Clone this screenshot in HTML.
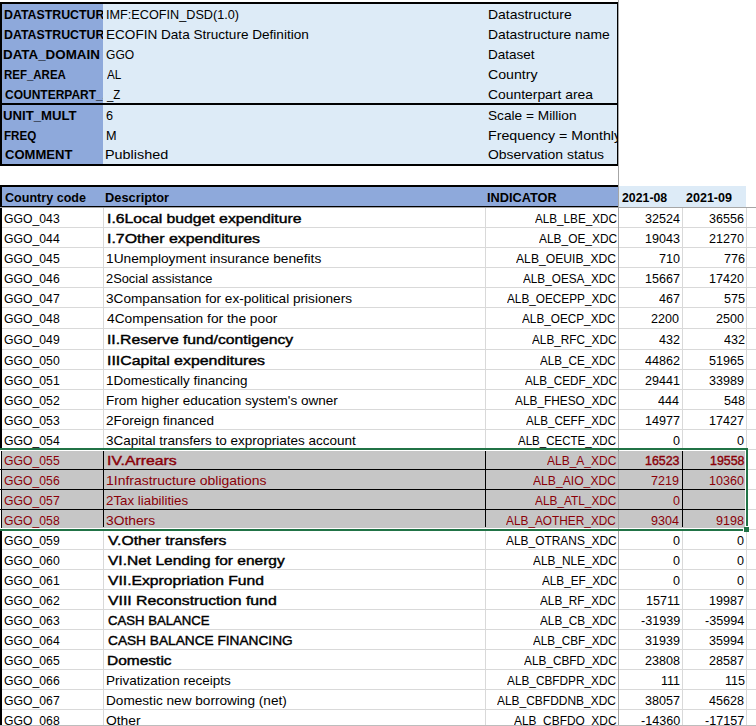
<!DOCTYPE html>
<html><head><meta charset="utf-8"><style>
html,body{margin:0;padding:0;background:#fff;}
#r{position:relative;width:756px;height:726px;overflow:hidden;background:#fff;}
#r div{position:absolute;}
#r .t{font-family:"Liberation Sans",sans-serif;font-size:13px;line-height:20px;white-space:pre;transform-origin:0 0;}
</style></head><body><div id="r">
<div style="left:2px;top:4px;width:101px;height:99px;background:#8EA9DB"></div>
<div style="left:2px;top:105px;width:101px;height:59px;background:#8EA9DB"></div>
<div style="left:103px;top:4px;width:514px;height:99px;background:#DDEBF7"></div>
<div style="left:103px;top:105px;width:514px;height:59px;background:#DDEBF7"></div>
<div style="left:2px;top:187px;width:616px;height:19px;background:#8EA9DB"></div>
<div style="left:619px;top:186px;width:127px;height:21px;background:#DDEBF7"></div>
<div style="left:2px;top:451px;width:743px;height:77px;background:#C6C6C6"></div>
<div style="left:2px;top:227px;width:754px;height:1px;background:#D9D9D9"></div>
<div style="left:2px;top:247px;width:754px;height:1px;background:#D9D9D9"></div>
<div style="left:2px;top:267px;width:754px;height:1px;background:#D9D9D9"></div>
<div style="left:2px;top:287px;width:754px;height:1px;background:#D9D9D9"></div>
<div style="left:2px;top:307px;width:754px;height:1px;background:#D9D9D9"></div>
<div style="left:2px;top:328px;width:754px;height:1px;background:#D9D9D9"></div>
<div style="left:2px;top:349px;width:754px;height:1px;background:#D9D9D9"></div>
<div style="left:2px;top:369px;width:754px;height:1px;background:#D9D9D9"></div>
<div style="left:2px;top:389px;width:754px;height:1px;background:#D9D9D9"></div>
<div style="left:2px;top:409px;width:754px;height:1px;background:#D9D9D9"></div>
<div style="left:2px;top:429px;width:754px;height:1px;background:#D9D9D9"></div>
<div style="left:748px;top:449px;width:8px;height:1px;background:#D9D9D9"></div>
<div style="left:748px;top:469px;width:8px;height:1px;background:#D9D9D9"></div>
<div style="left:748px;top:489px;width:8px;height:1px;background:#D9D9D9"></div>
<div style="left:748px;top:509px;width:8px;height:1px;background:#D9D9D9"></div>
<div style="left:748px;top:529px;width:8px;height:1px;background:#D9D9D9"></div>
<div style="left:2px;top:549px;width:754px;height:1px;background:#D9D9D9"></div>
<div style="left:2px;top:569px;width:754px;height:1px;background:#D9D9D9"></div>
<div style="left:2px;top:589px;width:754px;height:1px;background:#D9D9D9"></div>
<div style="left:2px;top:609px;width:754px;height:1px;background:#D9D9D9"></div>
<div style="left:2px;top:629px;width:754px;height:1px;background:#D9D9D9"></div>
<div style="left:2px;top:649px;width:754px;height:1px;background:#D9D9D9"></div>
<div style="left:2px;top:669px;width:754px;height:1px;background:#D9D9D9"></div>
<div style="left:2px;top:689px;width:754px;height:1px;background:#D9D9D9"></div>
<div style="left:2px;top:709px;width:754px;height:1px;background:#D9D9D9"></div>
<div style="left:2px;top:729px;width:754px;height:1px;background:#D9D9D9"></div>
<div style="left:103px;top:208px;width:1px;height:240px;background:#D9D9D9"></div>
<div style="left:103px;top:531px;width:1px;height:195px;background:#D9D9D9"></div>
<div style="left:485px;top:208px;width:1px;height:240px;background:#D9D9D9"></div>
<div style="left:485px;top:531px;width:1px;height:195px;background:#D9D9D9"></div>
<div style="left:682px;top:208px;width:1px;height:240px;background:#D9D9D9"></div>
<div style="left:682px;top:531px;width:1px;height:195px;background:#D9D9D9"></div>
<div style="left:746px;top:208px;width:1px;height:240px;background:#D9D9D9"></div>
<div style="left:746px;top:531px;width:1px;height:195px;background:#D9D9D9"></div>
<div style="left:618px;top:0px;width:1px;height:726px;background:#A6A6A6"></div>
<div style="left:0px;top:207px;width:756px;height:1px;background:#A6A6A6"></div>
<div style="left:0px;top:2px;width:618px;height:2px;background:#000"></div>
<div style="left:0px;top:2px;width:2px;height:164px;background:#000"></div>
<div style="left:617px;top:2px;width:1px;height:164px;background:#000"></div>
<div style="left:0px;top:103px;width:618px;height:2px;background:#000"></div>
<div style="left:0px;top:164px;width:618px;height:2px;background:#000"></div>
<div style="left:0px;top:185px;width:618px;height:2px;background:#000"></div>
<div style="left:0px;top:185px;width:2px;height:22px;background:#000"></div>
<div style="left:0px;top:206px;width:618px;height:1px;background:#000"></div>
<div style="left:0px;top:208px;width:2px;height:240px;background:#000"></div>
<div style="left:0px;top:531px;width:2px;height:195px;background:#000"></div>
<div style="left:1px;top:451px;width:1px;height:77px;background:#000"></div>
<div style="left:0px;top:469px;width:745px;height:1px;background:#000"></div>
<div style="left:0px;top:489px;width:745px;height:1px;background:#000"></div>
<div style="left:0px;top:509px;width:745px;height:1px;background:#000"></div>
<div style="left:103px;top:451px;width:1px;height:76px;background:#000"></div>
<div style="left:485px;top:451px;width:1px;height:76px;background:#000"></div>
<div style="left:682px;top:451px;width:1px;height:76px;background:#000"></div>
<div style="left:0px;top:448px;width:748px;height:2px;background:#217346"></div>
<div style="left:0px;top:529px;width:743px;height:2px;background:#217346"></div>
<div style="left:746px;top:448px;width:2px;height:78px;background:#217346"></div>
<div style="left:744px;top:527px;width:5px;height:5px;background:#217346"></div>
<div style="left:2px;top:0;width:101px;height:726px;overflow:hidden"><div style="position:absolute;left:-2px;top:0;width:756px;height:726px"><div class="t" style="left:3.55px;top:4.80px;font-weight:bold;color:#000;transform:scaleX(0.9500)">DATASTRUCTURE</div></div></div>
<div style="left:2px;top:0;width:101px;height:726px;overflow:hidden"><div style="position:absolute;left:-2px;top:0;width:756px;height:726px"><div class="t" style="left:3.55px;top:24.70px;font-weight:bold;color:#000;transform:scaleX(0.9500)">DATASTRUCTURE</div></div></div>
<div style="left:2px;top:0;width:101px;height:726px;overflow:hidden"><div style="position:absolute;left:-2px;top:0;width:756px;height:726px"><div class="t" style="left:3.47px;top:44.60px;font-weight:bold;color:#000;transform:scaleX(1.0283)">DATA_DOMAIN</div></div></div>
<div style="left:2px;top:0;width:101px;height:726px;overflow:hidden"><div style="position:absolute;left:-2px;top:0;width:756px;height:726px"><div class="t" style="left:3.62px;top:64.70px;font-weight:bold;color:#000;transform:scaleX(0.8826)">REF_AREA</div></div></div>
<div style="left:2px;top:0;width:101px;height:726px;overflow:hidden"><div style="position:absolute;left:-2px;top:0;width:756px;height:726px"><div class="t" style="left:4.50px;top:84.60px;font-weight:bold;color:#000;transform:scaleX(0.9232)">COUNTERPART_AREA</div></div></div>
<div style="left:2px;top:0;width:101px;height:726px;overflow:hidden"><div style="position:absolute;left:-2px;top:0;width:756px;height:726px"><div class="t" style="left:3.49px;top:105.70px;font-weight:bold;color:#000;transform:scaleX(1.0125)">UNIT_MULT</div></div></div>
<div style="left:2px;top:0;width:101px;height:726px;overflow:hidden"><div style="position:absolute;left:-2px;top:0;width:756px;height:726px"><div class="t" style="left:3.61px;top:125.60px;font-weight:bold;color:#000;transform:scaleX(0.8943)">FREQ</div></div></div>
<div style="left:2px;top:0;width:101px;height:726px;overflow:hidden"><div style="position:absolute;left:-2px;top:0;width:756px;height:726px"><div class="t" style="left:4.50px;top:145.40px;font-weight:bold;color:#000;transform:scaleX(1.0030)">COMMENT</div></div></div>
<div class="t" style="left:105.63px;top:4.80px;color:#000;transform:scaleX(0.9748)">IMF:ECOFIN_DSD(1.0)</div>
<div class="t" style="left:105.56px;top:24.70px;color:#000;transform:scaleX(1.0435)">ECOFIN Data Structure Definition</div>
<div class="t" style="left:105.67px;top:44.60px;color:#000;transform:scaleX(0.9276)">GGO</div>
<div class="t" style="left:106.60px;top:64.70px;color:#000;transform:scaleX(0.9000)">AL</div>
<div class="t" style="left:106.60px;top:84.60px;color:#000;transform:scaleX(0.8800)">_Z</div>
<div class="t" style="left:105.63px;top:105.70px;color:#000;transform:scaleX(0.9749)">6</div>
<div class="t" style="left:105.63px;top:125.60px;color:#000;transform:scaleX(0.9749)">M</div>
<div class="t" style="left:105.49px;top:145.40px;color:#000;transform:scaleX(1.1073)">Published</div>
<div style="left:486px;top:0;width:131px;height:726px;overflow:hidden"><div style="position:absolute;left:-486px;top:0;width:756px;height:726px"><div class="t" style="left:487.63px;top:4.80px;color:#000;transform:scaleX(1.0727)">Datastructure</div></div></div>
<div style="left:486px;top:0;width:131px;height:726px;overflow:hidden"><div style="position:absolute;left:-486px;top:0;width:756px;height:726px"><div class="t" style="left:487.63px;top:24.70px;color:#000;transform:scaleX(1.0664)">Datastructure name</div></div></div>
<div style="left:486px;top:0;width:131px;height:726px;overflow:hidden"><div style="position:absolute;left:-486px;top:0;width:756px;height:726px"><div class="t" style="left:487.66px;top:44.60px;color:#000;transform:scaleX(1.0409)">Dataset</div></div></div>
<div style="left:486px;top:0;width:131px;height:726px;overflow:hidden"><div style="position:absolute;left:-486px;top:0;width:756px;height:726px"><div class="t" style="left:487.61px;top:64.70px;color:#000;transform:scaleX(1.0886)">Country</div></div></div>
<div style="left:486px;top:0;width:131px;height:726px;overflow:hidden"><div style="position:absolute;left:-486px;top:0;width:756px;height:726px"><div class="t" style="left:487.63px;top:84.60px;color:#000;transform:scaleX(1.0680)">Counterpart area</div></div></div>
<div style="left:486px;top:0;width:131px;height:726px;overflow:hidden"><div style="position:absolute;left:-486px;top:0;width:756px;height:726px"><div class="t" style="left:487.65px;top:105.70px;color:#000;transform:scaleX(1.0518)">Scale = Million</div></div></div>
<div style="left:486px;top:0;width:131px;height:726px;overflow:hidden"><div style="position:absolute;left:-486px;top:0;width:756px;height:726px"><div class="t" style="left:487.61px;top:125.60px;color:#000;transform:scaleX(1.0934)">Frequency = Monthly</div></div></div>
<div style="left:486px;top:0;width:131px;height:726px;overflow:hidden"><div style="position:absolute;left:-486px;top:0;width:756px;height:726px"><div class="t" style="left:487.63px;top:145.40px;color:#000;transform:scaleX(1.0710)">Observation status</div></div></div>
<div class="t" style="left:4.80px;top:187.60px;font-weight:bold;color:#000;transform:scaleX(0.9663)">Country code</div>
<div class="t" style="left:105.41px;top:187.60px;font-weight:bold;color:#000;transform:scaleX(0.9859)">Descriptor</div>
<div class="t" style="left:487.02px;top:187.60px;font-weight:bold;color:#000;transform:scaleX(0.9814)">INDICATOR</div>
<div class="t" style="left:621.70px;top:187.60px;font-weight:bold;color:#000;transform:scaleX(0.9468)">2021-08</div>
<div class="t" style="left:685.50px;top:187.60px;font-weight:bold;color:#000;transform:scaleX(0.9638)">2021-09</div>
<div class="t" style="left:3.56px;top:209.20px;color:#000;transform:scaleX(0.9397)">GGO_043</div>
<div class="t" style="left:106.69px;top:209.20px;-webkit-text-stroke:0.4px #000;color:#000;transform:scaleX(1.2119)">I.6Local budget expenditure</div>
<div class="t" style="left:534.70px;top:209.20px;color:#000;transform:scaleX(0.8989)">ALB_LBE_XDC</div>
<div class="t" style="left:644.68px;top:209.20px;color:#000;transform:scaleX(0.9671)">32524</div>
<div class="t" style="left:709.18px;top:209.20px;color:#000;transform:scaleX(0.9671)">36556</div>
<div class="t" style="left:3.56px;top:229.20px;color:#000;transform:scaleX(0.9397)">GGO_044</div>
<div class="t" style="left:106.68px;top:229.20px;-webkit-text-stroke:0.4px #000;color:#000;transform:scaleX(1.2242)">I.7Other expenditures</div>
<div class="t" style="left:538.60px;top:229.20px;color:#000;transform:scaleX(0.9167)">ALB_OE_XDC</div>
<div class="t" style="left:644.68px;top:229.20px;color:#000;transform:scaleX(0.9671)">19043</div>
<div class="t" style="left:709.18px;top:229.20px;color:#000;transform:scaleX(0.9671)">21270</div>
<div class="t" style="left:3.56px;top:249.20px;color:#000;transform:scaleX(0.9397)">GGO_045</div>
<div class="t" style="left:105.54px;top:249.20px;color:#000;transform:scaleX(1.0564)">1Unemployment insurance benefits</div>
<div class="t" style="left:516.40px;top:249.20px;color:#000;transform:scaleX(0.9358)">ALB_OEUIB_XDC</div>
<div class="t" style="left:659.19px;top:249.20px;color:#000;transform:scaleX(0.9671)">710</div>
<div class="t" style="left:723.69px;top:249.20px;color:#000;transform:scaleX(0.9671)">776</div>
<div class="t" style="left:3.56px;top:269.20px;color:#000;transform:scaleX(0.9397)">GGO_046</div>
<div class="t" style="left:105.61px;top:269.20px;color:#000;transform:scaleX(0.9887)">2Social assistance</div>
<div class="t" style="left:523.40px;top:269.20px;color:#000;transform:scaleX(0.9039)">ALB_OESA_XDC</div>
<div class="t" style="left:644.68px;top:269.20px;color:#000;transform:scaleX(0.9671)">15667</div>
<div class="t" style="left:709.18px;top:269.20px;color:#000;transform:scaleX(0.9671)">17420</div>
<div class="t" style="left:3.56px;top:289.20px;color:#000;transform:scaleX(0.9397)">GGO_047</div>
<div class="t" style="left:105.55px;top:289.20px;color:#000;transform:scaleX(1.0476)">3Compansation for ex-political prisioners</div>
<div class="t" style="left:506.90px;top:289.20px;color:#000;transform:scaleX(0.9058)">ALB_OECEPP_XDC</div>
<div class="t" style="left:659.19px;top:289.20px;color:#000;transform:scaleX(0.9671)">467</div>
<div class="t" style="left:723.69px;top:289.20px;color:#000;transform:scaleX(0.9671)">575</div>
<div class="t" style="left:3.56px;top:309.20px;color:#000;transform:scaleX(0.9397)">GGO_048</div>
<div class="t" style="left:106.60px;top:309.20px;color:#000;transform:scaleX(1.0571)">4Compensation for the poor</div>
<div class="t" style="left:522.40px;top:309.20px;color:#000;transform:scaleX(0.9049)">ALB_OECP_XDC</div>
<div class="t" style="left:651.45px;top:309.20px;color:#000;transform:scaleX(0.9671)">2200</div>
<div class="t" style="left:715.95px;top:309.20px;color:#000;transform:scaleX(0.9671)">2500</div>
<div class="t" style="left:3.56px;top:330.20px;color:#000;transform:scaleX(0.9397)">GGO_049</div>
<div class="t" style="left:106.69px;top:330.20px;-webkit-text-stroke:0.4px #000;color:#000;transform:scaleX(1.2092)">II.Reserve fund/contigency</div>
<div class="t" style="left:532.20px;top:330.20px;color:#000;transform:scaleX(0.9065)">ALB_RFC_XDC</div>
<div class="t" style="left:659.19px;top:330.20px;color:#000;transform:scaleX(0.9671)">432</div>
<div class="t" style="left:723.69px;top:330.20px;color:#000;transform:scaleX(0.9671)">432</div>
<div class="t" style="left:3.56px;top:351.20px;color:#000;transform:scaleX(0.9397)">GGO_050</div>
<div class="t" style="left:106.68px;top:351.20px;-webkit-text-stroke:0.4px #000;color:#000;transform:scaleX(1.2219)">IIICapital expenditures</div>
<div class="t" style="left:540.30px;top:351.20px;color:#000;transform:scaleX(0.8964)">ALB_CE_XDC</div>
<div class="t" style="left:644.68px;top:351.20px;color:#000;transform:scaleX(0.9671)">44862</div>
<div class="t" style="left:709.18px;top:351.20px;color:#000;transform:scaleX(0.9671)">51965</div>
<div class="t" style="left:3.56px;top:371.20px;color:#000;transform:scaleX(0.9397)">GGO_051</div>
<div class="t" style="left:105.56px;top:371.20px;color:#000;transform:scaleX(1.0356)">1Domestically financing</div>
<div class="t" style="left:524.50px;top:371.20px;color:#000;transform:scaleX(0.9020)">ALB_CEDF_XDC</div>
<div class="t" style="left:644.68px;top:371.20px;color:#000;transform:scaleX(0.9671)">29441</div>
<div class="t" style="left:709.18px;top:371.20px;color:#000;transform:scaleX(0.9671)">33989</div>
<div class="t" style="left:3.56px;top:391.20px;color:#000;transform:scaleX(0.9397)">GGO_052</div>
<div class="t" style="left:105.56px;top:391.20px;color:#000;transform:scaleX(1.0401)">From higher education system&#x27;s owner</div>
<div class="t" style="left:515.30px;top:391.20px;color:#000;transform:scaleX(0.9118)">ALB_FHESO_XDC</div>
<div class="t" style="left:658.22px;top:391.20px;color:#000;transform:scaleX(0.9671)">444</div>
<div class="t" style="left:723.69px;top:391.20px;color:#000;transform:scaleX(0.9671)">548</div>
<div class="t" style="left:3.56px;top:411.20px;color:#000;transform:scaleX(0.9397)">GGO_053</div>
<div class="t" style="left:105.56px;top:411.20px;color:#000;transform:scaleX(1.0382)">2Foreign financed</div>
<div class="t" style="left:526.20px;top:411.20px;color:#000;transform:scaleX(0.8940)">ALB_CEFF_XDC</div>
<div class="t" style="left:644.68px;top:411.20px;color:#000;transform:scaleX(0.9671)">14977</div>
<div class="t" style="left:709.18px;top:411.20px;color:#000;transform:scaleX(0.9671)">17427</div>
<div class="t" style="left:3.56px;top:431.20px;color:#000;transform:scaleX(0.9397)">GGO_054</div>
<div class="t" style="left:105.56px;top:431.20px;color:#000;transform:scaleX(1.0379)">3Capital transfers to expropriates account</div>
<div class="t" style="left:518.10px;top:431.20px;color:#000;transform:scaleX(0.8864)">ALB_CECTE_XDC</div>
<div class="t" style="left:672.73px;top:431.20px;color:#000;transform:scaleX(0.9671)">0</div>
<div class="t" style="left:737.23px;top:431.20px;color:#000;transform:scaleX(0.9671)">0</div>
<div class="t" style="left:3.56px;top:451.20px;color:#8A0008;transform:scaleX(0.9397)">GGO_055</div>
<div class="t" style="left:106.68px;top:451.20px;-webkit-text-stroke:0.4px #8A0008;color:#8A0008;transform:scaleX(1.2161)">IV.Arrears</div>
<div class="t" style="left:547.30px;top:451.20px;color:#8A0008;transform:scaleX(0.9230)">ALB_A_XDC</div>
<div class="t" style="left:645.15px;top:451.20px;-webkit-text-stroke:0.4px #8A0008;color:#8A0008;transform:scaleX(0.9543)">16523</div>
<div class="t" style="left:709.65px;top:451.20px;-webkit-text-stroke:0.4px #8A0008;color:#8A0008;transform:scaleX(0.9543)">19558</div>
<div class="t" style="left:3.56px;top:471.20px;color:#8A0008;transform:scaleX(0.9397)">GGO_056</div>
<div class="t" style="left:105.53px;top:471.20px;color:#8A0008;transform:scaleX(1.0730)">1Infrastructure obligations</div>
<div class="t" style="left:533.40px;top:471.20px;color:#8A0008;transform:scaleX(0.9341)">ALB_AIO_XDC</div>
<div class="t" style="left:651.45px;top:471.20px;color:#8A0008;transform:scaleX(0.9671)">7219</div>
<div class="t" style="left:709.18px;top:471.20px;color:#8A0008;transform:scaleX(0.9671)">10360</div>
<div class="t" style="left:3.56px;top:491.20px;color:#8A0008;transform:scaleX(0.9397)">GGO_057</div>
<div class="t" style="left:105.58px;top:491.20px;color:#8A0008;transform:scaleX(1.0241)">2Tax liabilities</div>
<div class="t" style="left:534.50px;top:491.20px;color:#8A0008;transform:scaleX(0.9112)">ALB_ATL_XDC</div>
<div class="t" style="left:672.73px;top:491.20px;color:#8A0008;transform:scaleX(0.9671)">0</div>
<div class="t" style="left:3.56px;top:511.20px;color:#8A0008;transform:scaleX(0.9397)">GGO_058</div>
<div class="t" style="left:105.54px;top:511.20px;color:#8A0008;transform:scaleX(1.0622)">3Others</div>
<div class="t" style="left:506.30px;top:511.20px;color:#8A0008;transform:scaleX(0.9108)">ALB_AOTHER_XDC</div>
<div class="t" style="left:651.45px;top:511.20px;color:#8A0008;transform:scaleX(0.9671)">9304</div>
<div class="t" style="left:715.95px;top:511.20px;color:#8A0008;transform:scaleX(0.9671)">9198</div>
<div class="t" style="left:3.56px;top:531.20px;color:#000;transform:scaleX(0.9397)">GGO_059</div>
<div class="t" style="left:107.90px;top:531.20px;-webkit-text-stroke:0.4px #000;color:#000;transform:scaleX(1.2112)">V.Other transfers</div>
<div class="t" style="left:505.50px;top:531.20px;color:#000;transform:scaleX(0.9175)">ALB_OTRANS_XDC</div>
<div class="t" style="left:672.73px;top:531.20px;color:#000;transform:scaleX(0.9671)">0</div>
<div class="t" style="left:737.23px;top:531.20px;color:#000;transform:scaleX(0.9671)">0</div>
<div class="t" style="left:3.56px;top:551.20px;color:#000;transform:scaleX(0.9397)">GGO_060</div>
<div class="t" style="left:107.90px;top:551.20px;-webkit-text-stroke:0.4px #000;color:#000;transform:scaleX(1.1926)">VI.Net Lending for energy</div>
<div class="t" style="left:532.60px;top:551.20px;color:#000;transform:scaleX(0.9121)">ALB_NLE_XDC</div>
<div class="t" style="left:672.73px;top:551.20px;color:#000;transform:scaleX(0.9671)">0</div>
<div class="t" style="left:737.23px;top:551.20px;color:#000;transform:scaleX(0.9671)">0</div>
<div class="t" style="left:3.56px;top:571.20px;color:#000;transform:scaleX(0.9397)">GGO_061</div>
<div class="t" style="left:107.90px;top:571.20px;-webkit-text-stroke:0.4px #000;color:#000;transform:scaleX(1.2062)">VII.Expropriation Fund</div>
<div class="t" style="left:541.50px;top:571.20px;color:#000;transform:scaleX(0.9037)">ALB_EF_XDC</div>
<div class="t" style="left:672.73px;top:571.20px;color:#000;transform:scaleX(0.9671)">0</div>
<div class="t" style="left:737.23px;top:571.20px;color:#000;transform:scaleX(0.9671)">0</div>
<div class="t" style="left:3.56px;top:591.20px;color:#000;transform:scaleX(0.9397)">GGO_062</div>
<div class="t" style="left:107.90px;top:591.20px;-webkit-text-stroke:0.4px #000;color:#000;transform:scaleX(1.2159)">VIII Reconstruction fund</div>
<div class="t" style="left:540.30px;top:591.20px;color:#000;transform:scaleX(0.9072)">ALB_RF_XDC</div>
<div class="t" style="left:645.65px;top:591.20px;color:#000;transform:scaleX(0.9671)">15711</div>
<div class="t" style="left:709.18px;top:591.20px;color:#000;transform:scaleX(0.9671)">19987</div>
<div class="t" style="left:3.56px;top:611.20px;color:#000;transform:scaleX(0.9397)">GGO_063</div>
<div class="t" style="left:107.90px;top:611.20px;-webkit-text-stroke:0.4px #000;color:#000;transform:scaleX(1.0120)">CASH BALANCE</div>
<div class="t" style="left:539.60px;top:611.20px;color:#000;transform:scaleX(0.9048)">ALB_CB_XDC</div>
<div class="t" style="left:640.81px;top:611.20px;color:#000;transform:scaleX(0.9671)">-31939</div>
<div class="t" style="left:705.31px;top:611.20px;color:#000;transform:scaleX(0.9671)">-35994</div>
<div class="t" style="left:3.56px;top:631.20px;color:#000;transform:scaleX(0.9397)">GGO_064</div>
<div class="t" style="left:107.90px;top:631.20px;-webkit-text-stroke:0.4px #000;color:#000;transform:scaleX(1.0520)">CASH BALANCE FINANCING</div>
<div class="t" style="left:532.60px;top:631.20px;color:#000;transform:scaleX(0.9022)">ALB_CBF_XDC</div>
<div class="t" style="left:644.68px;top:631.20px;color:#000;transform:scaleX(0.9671)">31939</div>
<div class="t" style="left:709.18px;top:631.20px;color:#000;transform:scaleX(0.9671)">35994</div>
<div class="t" style="left:3.56px;top:651.20px;color:#000;transform:scaleX(0.9397)">GGO_065</div>
<div class="t" style="left:106.71px;top:651.20px;-webkit-text-stroke:0.4px #000;color:#000;transform:scaleX(1.1925)">Domestic</div>
<div class="t" style="left:523.70px;top:651.20px;color:#000;transform:scaleX(0.9099)">ALB_CBFD_XDC</div>
<div class="t" style="left:644.68px;top:651.20px;color:#000;transform:scaleX(0.9671)">23808</div>
<div class="t" style="left:709.18px;top:651.20px;color:#000;transform:scaleX(0.9671)">28587</div>
<div class="t" style="left:3.56px;top:671.20px;color:#000;transform:scaleX(0.9397)">GGO_066</div>
<div class="t" style="left:105.56px;top:671.20px;color:#000;transform:scaleX(1.0403)">Privatization receipts</div>
<div class="t" style="left:507.40px;top:671.20px;color:#000;transform:scaleX(0.9092)">ALB_CBFDPR_XDC</div>
<div class="t" style="left:661.12px;top:671.20px;color:#000;transform:scaleX(0.9671)">111</div>
<div class="t" style="left:724.66px;top:671.20px;color:#000;transform:scaleX(0.9671)">115</div>
<div class="t" style="left:3.56px;top:691.20px;color:#000;transform:scaleX(0.9397)">GGO_067</div>
<div class="t" style="left:105.55px;top:691.20px;color:#000;transform:scaleX(1.0468)">Domestic new borrowing (net)</div>
<div class="t" style="left:497.00px;top:691.20px;color:#000;transform:scaleX(0.9194)">ALB_CBFDDNB_XDC</div>
<div class="t" style="left:644.68px;top:691.20px;color:#000;transform:scaleX(0.9671)">38057</div>
<div class="t" style="left:709.18px;top:691.20px;color:#000;transform:scaleX(0.9671)">45628</div>
<div class="t" style="left:3.56px;top:711.20px;color:#000;transform:scaleX(0.9397)">GGO_068</div>
<div class="t" style="left:105.53px;top:711.20px;color:#000;transform:scaleX(1.0656)">Other</div>
<div class="t" style="left:514.00px;top:711.20px;color:#000;transform:scaleX(0.9153)">ALB_CBFDO_XDC</div>
<div class="t" style="left:640.81px;top:711.20px;color:#000;transform:scaleX(0.9671)">-14360</div>
<div class="t" style="left:705.31px;top:711.20px;color:#000;transform:scaleX(0.9671)">-17157</div>
<div style="left:0;top:725px;width:756px;height:1px;background:#BDBDBD"></div>
</div></body></html>
